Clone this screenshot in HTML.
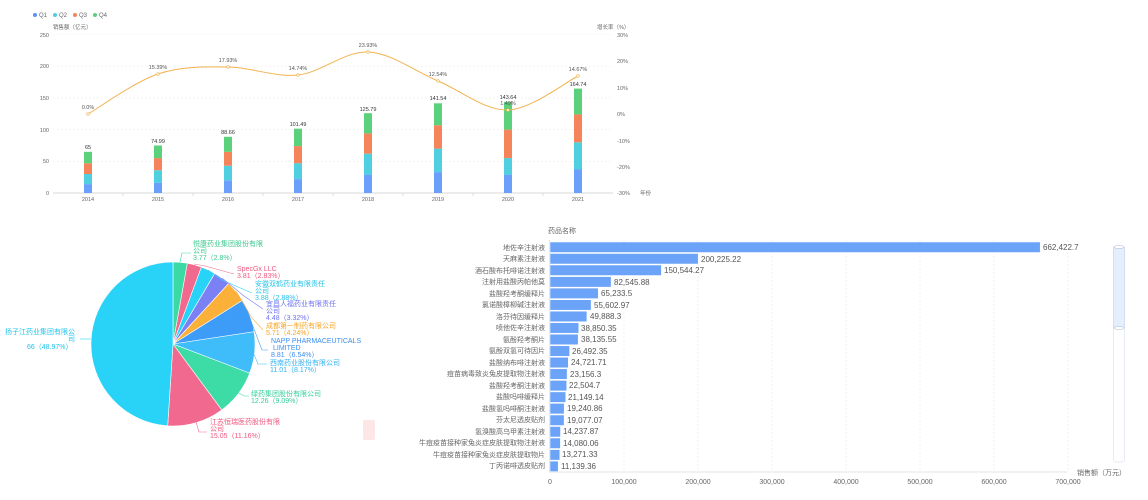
<!DOCTYPE html><html><head><meta charset="utf-8"><style>
html,body{margin:0;padding:0;background:#fff;width:1148px;height:500px;overflow:hidden}
svg{display:block;font-family:"Liberation Sans","Noto Sans CJK SC",sans-serif}
</style></head><body>
<svg width="1148" height="500" viewBox="0 0 1148 500" xmlns="http://www.w3.org/2000/svg">
<rect x="0" y="0" width="1148" height="500" fill="#fff"/>
<g font-size="6" fill="#666">
<circle cx="35" cy="15" r="2" fill="#5b8ff9"/><text x="39" y="17">Q1</text>
<circle cx="55" cy="15" r="2" fill="#4fcfe0"/><text x="59" y="17">Q2</text>
<circle cx="75" cy="15" r="2" fill="#f6845a"/><text x="79" y="17">Q3</text>
<circle cx="95" cy="15" r="2" fill="#5ad17a"/><text x="99" y="17">Q4</text>
<text x="53" y="29" font-size="5.5">销售额（亿元）</text>
<text x="597" y="29" font-size="5.5">增长率（%）</text>
<text x="640" y="195" font-size="5.5">年份</text>
</g>
<g stroke="#eee" stroke-dasharray="2,2" stroke-width="0.6">
<line x1="53" y1="34.5" x2="613" y2="34.5"/><line x1="53" y1="66.2" x2="613" y2="66.2"/><line x1="53" y1="97.9" x2="613" y2="97.9"/><line x1="53" y1="129.6" x2="613" y2="129.6"/><line x1="53" y1="161.3" x2="613" y2="161.3"/>
</g>
<line x1="53" y1="193" x2="613" y2="193" stroke="#ccc" stroke-width="0.8"/>
<g stroke="#ccc" stroke-width="0.6"><line x1="123" y1="193" x2="123" y2="196"/><line x1="193" y1="193" x2="193" y2="196"/><line x1="263" y1="193" x2="263" y2="196"/><line x1="333" y1="193" x2="333" y2="196"/><line x1="403" y1="193" x2="403" y2="196"/><line x1="473" y1="193" x2="473" y2="196"/><line x1="543" y1="193" x2="543" y2="196"/></g>
<g font-size="5.5" fill="#666" text-anchor="end">
<text x="49" y="195">0</text><text x="49" y="163">50</text><text x="49" y="132">100</text><text x="49" y="100">150</text><text x="49" y="68">200</text><text x="49" y="37">250</text>
</g>
<g font-size="5.5" fill="#666">
<text x="617" y="195">-30%</text><text x="617" y="169">-20%</text><text x="617" y="143">-10%</text><text x="617" y="116">0%</text><text x="617" y="90">10%</text><text x="617" y="63">20%</text><text x="617" y="37">30%</text>
</g>
<g font-size="5.5" fill="#666" text-anchor="middle">
<text x="88" y="201">2014</text><text x="158" y="201">2015</text><text x="228" y="201">2016</text><text x="298" y="201">2017</text><text x="368" y="201">2018</text><text x="438" y="201">2019</text><text x="508" y="201">2020</text><text x="578" y="201">2021</text>
</g>
<g>
<rect x="84" y="184.1" width="8" height="8.9" fill="#6aa0fb"/><rect x="84" y="174" width="8" height="10.1" fill="#4fcfe0"/><rect x="84" y="163.2" width="8" height="10.8" fill="#f6845a"/><rect x="84" y="151.8" width="8" height="11.4" fill="#5ad17a"/>
<rect x="154" y="182.9" width="8" height="10.1" fill="#6aa0fb"/><rect x="154" y="170.2" width="8" height="12.7" fill="#4fcfe0"/><rect x="154" y="158.1" width="8" height="12.1" fill="#f6845a"/><rect x="154" y="145.5" width="8" height="12.6" fill="#5ad17a"/>
<rect x="224" y="180.3" width="8" height="12.7" fill="#6aa0fb"/><rect x="224" y="165.7" width="8" height="14.6" fill="#4fcfe0"/><rect x="224" y="151.8" width="8" height="13.9" fill="#f6845a"/><rect x="224" y="136.8" width="8" height="15" fill="#5ad17a"/>
<rect x="294" y="179.1" width="8" height="13.9" fill="#6aa0fb"/><rect x="294" y="163.2" width="8" height="15.9" fill="#4fcfe0"/><rect x="294" y="146.1" width="8" height="17.1" fill="#f6845a"/><rect x="294" y="128.7" width="8" height="17.4" fill="#5ad17a"/>
<rect x="364" y="174.6" width="8" height="18.4" fill="#6aa0fb"/><rect x="364" y="153.7" width="8" height="20.9" fill="#4fcfe0"/><rect x="364" y="133.4" width="8" height="20.3" fill="#f6845a"/><rect x="364" y="113.2" width="8" height="20.2" fill="#5ad17a"/>
<rect x="434" y="172.1" width="8" height="20.9" fill="#6aa0fb"/><rect x="434" y="148.6" width="8" height="23.5" fill="#4fcfe0"/><rect x="434" y="125.2" width="8" height="23.4" fill="#f6845a"/><rect x="434" y="103.3" width="8" height="21.9" fill="#5ad17a"/>
<rect x="504" y="174.6" width="8" height="18.4" fill="#6aa0fb"/><rect x="504" y="158.1" width="8" height="16.5" fill="#4fcfe0"/><rect x="504" y="129.6" width="8" height="28.5" fill="#f6845a"/><rect x="504" y="101.9" width="8" height="27.7" fill="#5ad17a"/>
<rect x="574" y="169.5" width="8" height="23.5" fill="#6aa0fb"/><rect x="574" y="142.3" width="8" height="27.2" fill="#4fcfe0"/><rect x="574" y="114.4" width="8" height="27.9" fill="#f6845a"/><rect x="574" y="88.6" width="8" height="25.8" fill="#5ad17a"/>
</g>
<g font-size="5.5" fill="#333" text-anchor="middle">
<text x="88" y="149">65</text><text x="158" y="143">74.99</text><text x="228" y="134">88.66</text><text x="298" y="126">101.49</text><text x="368" y="111">125.79</text><text x="438" y="100">141.54</text><text x="508" y="99">143.64</text><text x="578" y="86">164.74</text>
</g>
<path d="M88,114 C99.7,107.3 134.7,81.8 158,74 C181.3,66.2 204.7,66.8 228,67 C251.3,67.2 274.7,77.5 298,75 C321.3,72.5 344.7,51 368,52 C391.3,53 414.7,71.3 438,81 C461.3,90.7 484.7,110.8 508,110 C531.3,109.2 566.3,81.7 578,76" fill="none" stroke="#f2b34e" stroke-width="1"/>
<g fill="#fff" stroke="#f2b34e" stroke-width="0.7">
<circle cx="88" cy="114" r="1.3"/><circle cx="158" cy="74" r="1.3"/><circle cx="228" cy="67" r="1.3"/><circle cx="298" cy="75" r="1.3"/><circle cx="368" cy="52" r="1.3"/><circle cx="438" cy="81" r="1.3"/><circle cx="508" cy="110" r="1.3"/><circle cx="578" cy="76" r="1.3"/>
</g>
<g font-size="5.5" fill="#555" text-anchor="middle">
<text x="88" y="109">0.0%</text><text x="158" y="69">15.39%</text><text x="228" y="62">17.93%</text><text x="298" y="70">14.74%</text><text x="368" y="47">23.93%</text><text x="438" y="76">12.54%</text><text x="508" y="105">1.49%</text><text x="578" y="71">14.67%</text>
</g>

<g stroke="#fff" stroke-width="0.6">
<path d="M173,344 L173,262 A82,82 0 0,1 187.35,263.26 Z" fill="#3bd9a4"/>
<path d="M173,344 L187.35,263.26 A82,82 0 0,1 201.41,267.08 Z" fill="#f2698f"/>
<path d="M173,344 L201.41,267.08 A82,82 0 0,1 214.8,273.45 Z" fill="#28d3f7"/>
<path d="M173,344 L214.8,273.45 A82,82 0 0,1 228.5,283.63 Z" fill="#7b80f4"/>
<path d="M173,344 L228.5,283.63 A82,82 0 0,1 242.44,300.38 Z" fill="#fbb03a"/>
<path d="M173,344 L242.44,300.38 A82,82 0 0,1 254.08,331.74 Z" fill="#3d9cf7"/>
<path d="M173,344 L254.08,331.74 A82,82 0 0,1 249.65,373.13 Z" fill="#3ebdfa"/>
<path d="M173,344 L249.65,373.13 A82,82 0 0,1 221.74,409.94 Z" fill="#3ddca7"/>
<path d="M173,344 L221.74,409.94 A82,82 0 0,1 167.69,425.83 Z" fill="#f2698f"/>
<path d="M173,344 L167.69,425.83 A82,82 0 0,1 173,262 Z" fill="#28d3f7"/>
</g>
<g fill="none" stroke-width="0.6">
<polyline points="180,262 182,253 191,253" stroke="#3bd9a4"/>
<polyline points="194,264 205,266 234,274" stroke="#f2698f"/>
<polyline points="208,270 222,280 252,293" stroke="#28d3f7"/>
<polyline points="222,278 244,296 263,309" stroke="#7b80f4"/>
<polyline points="236,291 252,318 263,330" stroke="#fbb03a"/>
<polyline points="249,316 262,350 268,350" stroke="#3d9cf7"/>
<polyline points="253,352 258,364 267,364" stroke="#3ebdfa"/>
<polyline points="237,392 244,396 249,396" stroke="#3ddca7"/>
<polyline points="196,422 199,432 207,432" stroke="#f2698f"/>
<polyline points="91,339 80,339" stroke="#28d3f7"/>
</g>
<g font-size="7">
<g fill="#3cc98f"><text x="193" y="246">悦康药业集团股份有限</text><text x="193" y="253">公司</text><text x="193" y="260">3.77（2.8%）</text></g>
<g fill="#f0577f"><text x="237" y="271">SpecGx LLC</text><text x="237" y="278">3.81（2.83%）</text></g>
<g fill="#22c4ea"><text x="255" y="286">安徽双鹤药业有限责任</text><text x="255" y="293">公司</text><text x="255" y="300">3.88（2.88%）</text></g>
<g fill="#6d73ee"><text x="266" y="306">宜昌人福药业有限责任</text><text x="266" y="313">公司</text><text x="266" y="320">4.48（3.32%）</text></g>
<g fill="#f5a52a"><text x="266" y="328">成都第一制药有限公司</text><text x="266" y="335">5.71（4.24%）</text></g>
<g fill="#3a8ff0"><text x="271" y="343">NAPP PHARMACEUTICALS</text><text x="273" y="350">LIMITED</text><text x="271" y="357">8.81（6.54%）</text></g>
<g fill="#32b2f2"><text x="270" y="365">西南药业股份有限公司</text><text x="270" y="372">11.01（8.17%）</text></g>
<g fill="#33cf98"><text x="251" y="396">绿药集团股份有限公司</text><text x="251" y="403">12.26（9.09%）</text></g>
<g fill="#f0577f"><text x="210" y="424">江苏恒瑞医药股份有限</text><text x="210" y="431">公司</text><text x="210" y="438">15.05（11.16%）</text></g>
<g fill="#22c4ea"><text x="5" y="334">扬子江药业集团有限公</text><text x="68" y="341">司</text><text x="27" y="349">66（48.97%）</text></g>
</g>
<rect x="363" y="420" width="12" height="20" rx="2" fill="#fde6e6"/>

<text x="548" y="233" font-size="7" fill="#666">药品名称</text>
<g stroke="#e6e6e6" stroke-dasharray="2,2" stroke-width="0.6">
<line x1="624" y1="240" x2="624" y2="472"/><line x1="698" y1="240" x2="698" y2="472"/><line x1="772" y1="240" x2="772" y2="472"/><line x1="846" y1="240" x2="846" y2="472"/><line x1="920" y1="240" x2="920" y2="472"/><line x1="994" y1="240" x2="994" y2="472"/><line x1="1068" y1="240" x2="1068" y2="472"/>
</g>
<line x1="549.5" y1="240" x2="549.5" y2="472" stroke="#ccc" stroke-width="0.6"/>
<line x1="549" y1="472" x2="1068" y2="472" stroke="#ccc" stroke-width="0.6"/>
<g font-size="7" fill="#666" text-anchor="middle">
<text x="550" y="484">0</text><text x="624" y="484">100,000</text><text x="698" y="484">200,000</text><text x="772" y="484">300,000</text><text x="846" y="484">400,000</text><text x="920" y="484">500,000</text><text x="994" y="484">600,000</text><text x="1068" y="484">700,000</text>
</g>
<text x="1077" y="475" font-size="7" fill="#666">销售额（万元）</text>
<g fill="#6aa3f8" stroke="#fff" stroke-width="0.5">
<rect x="550" y="242" width="490.2" height="10.5"/>
<rect x="550" y="253.5" width="148.2" height="10.5"/>
<rect x="550" y="265" width="111.4" height="10.5"/>
<rect x="550" y="276.6" width="61.1" height="10.5"/>
<rect x="550" y="288.1" width="48.3" height="10.5"/>
<rect x="550" y="299.7" width="41.1" height="10.5"/>
<rect x="550" y="311.2" width="36.9" height="10.5"/>
<rect x="550" y="322.7" width="28.7" height="10.5"/>
<rect x="550" y="334.2" width="28.2" height="10.5"/>
<rect x="550" y="345.8" width="19.6" height="10.5"/>
<rect x="550" y="357.3" width="18.3" height="10.5"/>
<rect x="550" y="368.8" width="17.1" height="10.5"/>
<rect x="550" y="380.4" width="16.7" height="10.5"/>
<rect x="550" y="391.9" width="15.7" height="10.5"/>
<rect x="550" y="403.4" width="14.2" height="10.5"/>
<rect x="550" y="415" width="14.1" height="10.5"/>
<rect x="550" y="426.5" width="10.5" height="10.5"/>
<rect x="550" y="438" width="10.4" height="10.5"/>
<rect x="550" y="449.6" width="9.8" height="10.5"/>
<rect x="550" y="461.1" width="8.2" height="10.5"/>
</g>
<g font-size="7" fill="#666" text-anchor="end">
<text x="545" y="250">地佐辛注射液</text><text x="545" y="261">天麻素注射液</text><text x="545" y="273">酒石酸布托啡诺注射液</text><text x="545" y="284">注射用盐酸丙帕他莫</text><text x="545" y="296">盐酸羟考酮缓释片</text><text x="545" y="307">氯诺酸樟柳碱注射液</text><text x="545" y="319">洛芬待因缓释片</text><text x="545" y="330">喷他佐辛注射液</text><text x="545" y="342">氨酚羟考酮片</text><text x="545" y="353">氨酚双氢可待因片</text><text x="545" y="365">盐酸纳布啡注射液</text><text x="545" y="376">痘苗病毒致炎兔皮提取物注射液</text><text x="545" y="388">盐酸羟考酮注射液</text><text x="545" y="399">盐酸吗啡缓释片</text><text x="545" y="411">盐酸氢吗啡酮注射液</text><text x="545" y="422">芬太尼透皮贴剂</text><text x="545" y="434">氢溴酸高乌甲素注射液</text><text x="545" y="445">牛痘疫苗接种家兔炎症皮肤提取物注射液</text><text x="545" y="457">牛痘疫苗接种家兔炎症皮肤提取物片</text><text x="545" y="468">丁丙诺啡透皮贴剂</text>
</g>
<g font-size="8" fill="#555">
<text x="1043" y="250">662,422.7</text><text x="701" y="262">200,225.22</text><text x="664" y="273">150,544.27</text><text x="614" y="285">82,545.88</text><text x="601" y="296">65,233.5</text><text x="594" y="308">55,602.97</text><text x="590" y="319">49,888.3</text><text x="581" y="331">38,850.35</text><text x="581" y="342">38,135.55</text><text x="572" y="354">26,492.35</text><text x="571" y="365">24,721.71</text><text x="570" y="377">23,156.3</text><text x="569" y="388">22,504.7</text><text x="568" y="400">21,149.14</text><text x="567" y="411">19,240.86</text><text x="567" y="423">19,077.07</text><text x="563" y="434">14,237.87</text><text x="563" y="446">14,080.06</text><text x="562" y="457">13,271.33</text><text x="561" y="469">11,139.36</text>
</g>
<rect x="1113.5" y="247" width="11" height="215" rx="2" fill="#fff" stroke="#dde3ef" stroke-width="0.7"/>
<rect x="1113.5" y="247" width="11" height="81" fill="#e5eefc" stroke="#c8d6ef" stroke-width="0.6"/>
<ellipse cx="1119" cy="247" rx="5" ry="1.5" fill="#fff" stroke="#aab8d0" stroke-width="0.5"/>
<ellipse cx="1119" cy="328" rx="5" ry="1.5" fill="#fff" stroke="#aab8d0" stroke-width="0.5"/>
</svg>
</body></html>
